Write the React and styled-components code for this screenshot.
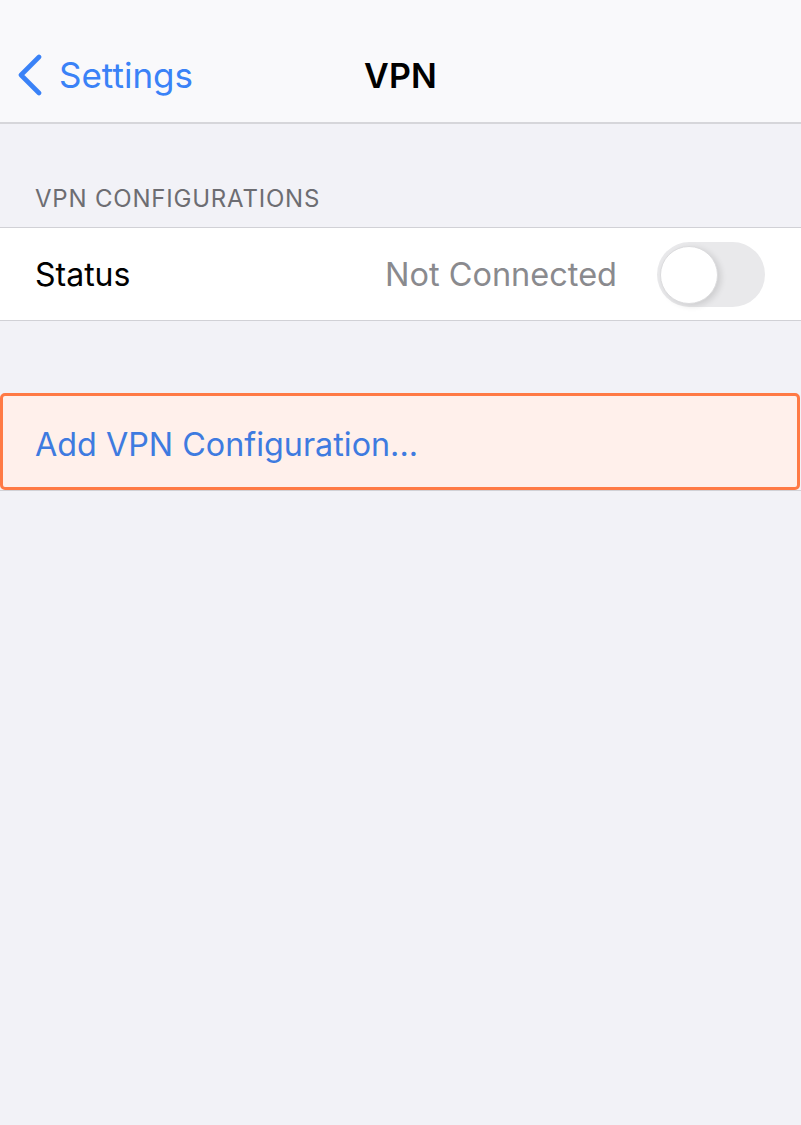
import * as React from 'react'
import styled, { createGlobalStyle } from 'styled-components'

const GlobalStyle = createGlobalStyle`
  html, body {
    margin: 0;
    padding: 0;
    background: #f2f2f7;
    font-family: Inter, "Liberation Sans", Arial, sans-serif;
    -webkit-font-smoothing: antialiased;
  }
`

const App = () =>
  <Page>
    <GlobalStyle />
    <NavBar>
      <BackButton>
        <svg width='26' height='42' viewBox='0 0 26 42' fill='none'>
          <path d='M22 3 L4 21 L22 39' stroke='#3a82f7' strokeWidth='4.6' strokeLinecap='round' strokeLinejoin='round' />
        </svg>
        <span>Settings</span>
      </BackButton>
      <Title>VPN</Title>
      <span />
    </NavBar>

    <SectionHeader>VPN Configurations</SectionHeader>
    <Group>
      <Row>
        <Label>Status</Label>
        <Detail>Not Connected</Detail>
        <Toggle aria-label='VPN status'>
          <Knob />
        </Toggle>
      </Row>
    </Group>

    <ActionGroup>
      <Highlight>
        <ActionLabel>Add VPN Configuration...</ActionLabel>
      </Highlight>
    </ActionGroup>
  </Page>

const Page = styled.div`
  min-height: 1125px;
  display: flex;
  flex-direction: column;
  background: #f2f2f7;
`

const NavBar = styled.header`
  height: 124px;
  display: grid;
  grid-template-columns: 1fr auto 1fr;
  align-items: center;
  padding-top: 28px;
  background: #f9f9fb;
  border-bottom: 2px solid #d6d6da;
  box-sizing: border-box;
`

const BackButton = styled.div`
  display: flex;
  align-items: center;
  gap: 16px;
  padding-left: 17px;
  color: #3a82f7;
  font-size: 35px;
`

const Title = styled.h1`
  margin: 0;
  font-size: 34px;
  font-weight: 600;
  color: #000;
  letter-spacing: 0.2px;
`

const SectionHeader = styled.div`
  height: 103px;
  display: flex;
  align-items: flex-end;
  padding: 0 35px 14px;
  box-sizing: border-box;
  font-size: 24px;
  line-height: 28px;
  color: #6d6d72;
  text-transform: uppercase;
  letter-spacing: 0.8px;
`

const Group = styled.section`
  background: #fff;
  border-top: 1px solid #d1d1d6;
  border-bottom: 1px solid #d1d1d6;
`

const Row = styled.div`
  height: 92px;
  display: flex;
  align-items: center;
  padding: 0 36px 0 35px;
`

const Label = styled.span`
  flex: 1;
  font-size: 32px;
  color: #000;
`

const Detail = styled.span`
  font-size: 32.5px;
  color: #8a8a8e;
  margin-right: 40px;
`

const Toggle = styled.div`
  position: relative;
  width: 108px;
  height: 65px;
  border-radius: 33px;
  background: #e9e9eb;
`

const Knob = styled.div`
  position: absolute;
  left: 3px;
  top: 4px;
  width: 58px;
  height: 58px;
  border-radius: 50%;
  background: #fff;
  border: 1px solid #dcdcde;
  box-sizing: border-box;
  box-shadow: 3px 2px 6px rgba(0, 0, 0, 0.12);
`

const ActionGroup = styled.section`
  margin-top: 72px;
  border-bottom: 1px solid #d1d1d6;
`

const Highlight = styled.div`
  height: 97px;
  display: flex;
  align-items: center;
  padding: 6px 35px 0 32px;
  box-sizing: border-box;
  background: #fff0eb;
  border: 3px solid #ff7a45;
  border-radius: 5px;
  margin-right: 1px;
`

const ActionLabel = styled.span`
  font-size: 32.3px;
  color: #3e7be0;
`

export default App
